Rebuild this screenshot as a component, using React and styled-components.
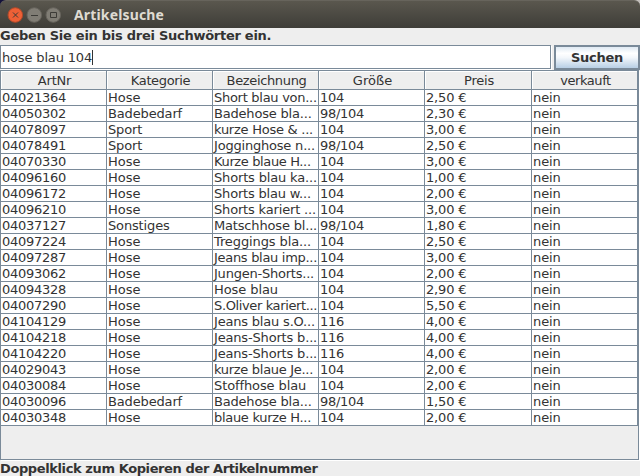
import React from "react";
import styled, { createGlobalStyle } from "styled-components";

const line = "#7a8a99";

const GlobalStyle = createGlobalStyle`
  html, body { margin: 0; padding: 0; }
  body { background: #eeeeee; overflow: hidden; }
  * { box-sizing: border-box; }
`;

const Window = styled.main`
  width: 640px;
  height: 476px;
  display: flex;
  flex-direction: column;
  background: #eeeeee;
  color: #333333;
  font: 13px "DejaVu Sans", sans-serif;
`;

const Backdrop = styled.div`
  flex: none;
  height: 28px;
  background: linear-gradient(90deg, #14123a 50%, #c4c0bc 50%);
`;

const TitleBar = styled.header`
  height: 28px;
  display: flex;
  align-items: center;
  padding-left: 7px;
  border-radius: 6px 6px 0 0;
  border-top: 1px solid #67645c;
  background: linear-gradient(#5a574e, #3e3d38);
`;

const Controls = styled.div`
  display: flex;
  gap: 3px;
`;

const Control = styled.svg`
  display: block;
  width: 16px;
  height: 16px;
`;

const Title = styled.h1`
  margin: 0 0 0 13px;
  color: #dfdbd2;
  font: bold 14px/20px "Noto Sans", sans-serif;
  letter-spacing: 0.15px;
`;

const Label = styled.div`
  flex: none;
  height: ${(p) => p.$height}px;
  line-height: ${(p) => p.$lineHeight}px;
  font-weight: bold;
  white-space: nowrap;
  letter-spacing: ${(p) => p.$spacing}px;
`;

const SearchRow = styled.form`
  flex: none;
  display: flex;
  height: 25px;
  gap: 3px;
`;

const Field = styled.div`
  width: 551px;
  height: 24px;
  display: flex;
  align-items: center;
  padding-left: 1px;
  border: 1px solid ${line};
  background: #fff;
  box-shadow: 1px 1px #fff;
  letter-spacing: -0.16px;
  white-space: nowrap;
`;

const Caret = styled.span`
  width: 1px;
  height: 15px;
  background: #333;
`;

const SearchButton = styled.button`
  width: 86px;
  height: 25px;
  padding: 0;
  border: 2px solid ${line};
  border-radius: 0;
  color: #333;
  font: bold 13px/19px "DejaVu Sans", sans-serif;
  letter-spacing: -0.25px;
  background: linear-gradient(#dfe9f3, #ffffff 30%, #f3f7fb 50%, #b8cfe5);
`;

const ScrollPane = styled.section`
  flex: none;
  width: 639px;
  height: 390px;
  border: 1px solid ${line};
  box-shadow: 1px 1px #fff;
`;

const columns = "106px 106px 106px 106px 107px 106px";

const HeaderRow = styled.div`
  display: grid;
  grid-template-columns: ${columns};
  height: 19px;
`;

const HeaderCell = styled.div`
  height: 19px;
  border-right: 1px solid ${line};
  border-bottom: 1px solid ${line};
  box-shadow: inset 1px 1px #fff;
  text-align: center;
  line-height: 19px;
  padding-left: 2px;
  letter-spacing: ${(p) => p.$spacing}px;
`;

const Row = styled.div`
  display: grid;
  grid-template-columns: ${columns};
  height: 16px;
`;

const Cell = styled.div`
  height: 16px;
  padding-left: 1px;
  border-right: 1px solid ${line};
  border-bottom: 1px solid ${line};
  background: #fff;
  line-height: 15px;
  white-space: nowrap;
  overflow: hidden;
  letter-spacing: ${(p) => p.$spacing}px;
`;

const headers = [
  ["ArtNr", -0.2],
  ["Kategorie", -0.35],
  ["Bezeichnung", -0.35],
  ["Größe", 0],
  ["Preis", -0.2],
  ["verkauft", -0.45],
];

// Article number, category, description, tracking of the description, size, price
const rows = [
  ["04021364", "Hose", "Short blau von...", -0.28, "104", "2,50 €"],
  ["04050302", "Badebedarf", "Badehose bla...", -0.19, "98/104", "2,30 €"],
  ["04078097", "Sport", "kurze Hose & ...", -0.25, "104", "3,00 €"],
  ["04078491", "Sport", "Jogginghose n...", -0.2, "98/104", "2,50 €"],
  ["04070330", "Hose", "Kurze blaue H...", -0.37, "104", "3,00 €"],
  ["04096160", "Hose", "Shorts blau ka...", -0.16, "104", "1,00 €"],
  ["04096172", "Hose", "Shorts blau w...", -0.18, "104", "2,00 €"],
  ["04096210", "Hose", "Shorts kariert ...", -0.17, "104", "3,00 €"],
  ["04037127", "Sonstiges", "Matschhose bl...", -0.17, "98/104", "1,80 €"],
  ["04097224", "Hose", "Treggings bla...", -0.11, "104", "2,50 €"],
  ["04097287", "Hose", "Jeans blau imp...", -0.3, "104", "3,00 €"],
  ["04093062", "Hose", "Jungen-Shorts...", -0.22, "104", "2,00 €"],
  ["04094328", "Hose", "Hose blau", -0.08, "104", "2,90 €"],
  ["04007290", "Hose", "S.Oliver kariert...", -0.37, "104", "5,50 €"],
  ["04104129", "Hose", "Jeans blau s.O...", -0.19, "116", "4,00 €"],
  ["04104218", "Hose", "Jeans-Shorts b...", -0.17, "116", "4,00 €"],
  ["04104220", "Hose", "Jeans-Shorts b...", -0.17, "116", "4,00 €"],
  ["04029043", "Hose", "kurze blaue Je...", -0.3, "104", "2,00 €"],
  ["04030084", "Hose", "Stoffhose blau", -0.1, "104", "2,00 €"],
  ["04030096", "Badebedarf", "Badehose bla...", -0.19, "98/104", "1,50 €"],
  ["04030348", "Hose", "blaue kurze H...", -0.3, "104", "2,00 €"],
];

function ControlIcon({ fill, edge, children }) {
  return (
    <Control viewBox="0 0 16 16" fill="none">
      <circle cx="8.3" cy="8" r="7.3" fill={fill} stroke={edge} />
      <g stroke="#3c3b37" strokeWidth="1">{children}</g>
    </Control>
  );
}

export default function App() {
  return (
    <Window>
      <GlobalStyle />
      <Backdrop>
        <TitleBar>
          <Controls>
            <ControlIcon fill="#ee6036" edge="#b0492a">
              <path d="M6 5.5l5 5M11 5.5l-5 5" />
            </ControlIcon>
            <ControlIcon fill="#807d75" edge="#66635c">
              <path d="M5 8.5h7" />
            </ControlIcon>
            <ControlIcon fill="#807d75" edge="#66635c">
              <path d="M5.5 5.5h6v5h-6z" />
            </ControlIcon>
          </Controls>
          <Title>Artikelsuche</Title>
        </TitleBar>
      </Backdrop>
      <Label $height={17} $lineHeight={15} $spacing={-0.27}>
        Geben Sie ein bis drei Suchwörter ein.
      </Label>
      <SearchRow onSubmit={(e) => e.preventDefault()}>
        <Field>
          <span>hose blau 104</span>
          <Caret />
        </Field>
        <SearchButton>Suchen</SearchButton>
      </SearchRow>
      <ScrollPane>
        <HeaderRow>
          {headers.map(([name, spacing]) => (
            <HeaderCell key={name} $spacing={spacing}>{name}</HeaderCell>
          ))}
        </HeaderRow>
        {rows.map(([number, category, description, tracking, size, price]) => (
          <Row key={number}>
            <Cell $spacing={-0.27}>{number}</Cell>
            <Cell $spacing={category === "Hose" ? 0 : -0.15}>{category}</Cell>
            <Cell $spacing={tracking}>{description}</Cell>
            <Cell $spacing={-0.27}>{size}</Cell>
            <Cell $spacing={-0.15}>{price}</Cell>
            <Cell $spacing={-0.1}>nein</Cell>
          </Row>
        ))}
      </ScrollPane>
      <Label $height={16} $lineHeight={17} $spacing={-0.39}>
        Doppelklick zum Kopieren der Artikelnummer
      </Label>
    </Window>
  );
}
